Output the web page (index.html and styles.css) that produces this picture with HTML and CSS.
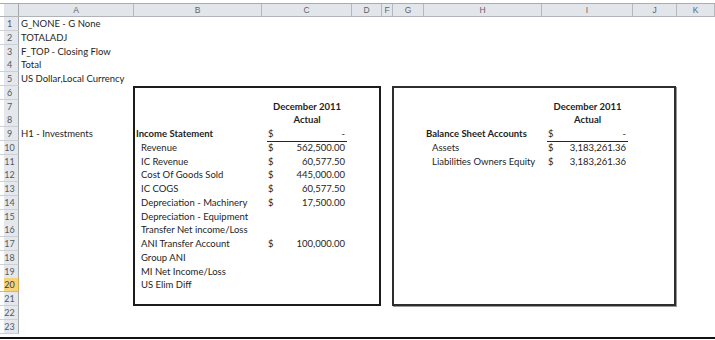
FILE: index.html
```html
<!DOCTYPE html>
<html>
<head>
<meta charset="utf-8">
<link rel="stylesheet" href="styles.css">
</head>
<body>
<div class="sheet">
  <div class="colhdr">
    <div class="corner"></div>
    <div class="ch">A</div>
    <div class="ch">B</div>
    <div class="ch">C</div>
    <div class="ch">D</div>
    <div class="ch">F</div>
    <div class="ch">G</div>
    <div class="ch">H</div>
    <div class="ch">I</div>
    <div class="ch">J</div>
    <div class="ch">K</div>
  </div>
  <div class="body">
    <div class="rows">
      <div class="row"><div class="rh">1</div><div class="ca">G_NONE - G None</div></div>
      <div class="row"><div class="rh">2</div><div class="ca">TOTALADJ</div></div>
      <div class="row"><div class="rh">3</div><div class="ca">F_TOP - Closing Flow</div></div>
      <div class="row"><div class="rh">4</div><div class="ca">Total</div></div>
      <div class="row"><div class="rh">5</div><div class="ca">US Dollar,Local Currency</div></div>
      <div class="row"><div class="rh">6</div></div>
      <div class="row"><div class="rh">7</div></div>
      <div class="row"><div class="rh">8</div></div>
      <div class="row"><div class="rh">9</div><div class="ca">H1 - Investments</div></div>
      <div class="row"><div class="rh">10</div></div>
      <div class="row"><div class="rh">11</div></div>
      <div class="row"><div class="rh">12</div></div>
      <div class="row"><div class="rh">13</div></div>
      <div class="row"><div class="rh">14</div></div>
      <div class="row"><div class="rh">15</div></div>
      <div class="row"><div class="rh">16</div></div>
      <div class="row"><div class="rh">17</div></div>
      <div class="row"><div class="rh">18</div></div>
      <div class="row"><div class="rh">19</div></div>
      <div class="row"><div class="rh sel">20</div></div>
      <div class="row"><div class="rh">21</div></div>
      <div class="row"><div class="rh">22</div></div>
      <div class="row"><div class="rh">23</div></div>
    </div>
    <div class="frames">
      <div class="frame f1">
        <div class="fl"></div>
        <div class="fl"><div></div><div class="hd">December 2011</div></div>
        <div class="fl"><div></div><div class="hd">Actual</div></div>
        <div class="fl"><div class="title">Income Statement</div><div class="amt ul"><span>$</span><span>-</span></div></div>
        <div class="fl"><div class="item">Revenue</div><div class="amt"><span>$</span><span>562,500.00</span></div></div>
        <div class="fl"><div class="item">IC Revenue</div><div class="amt"><span>$</span><span>60,577.50</span></div></div>
        <div class="fl"><div class="item">Cost Of Goods Sold</div><div class="amt"><span>$</span><span>445,000.00</span></div></div>
        <div class="fl"><div class="item">IC COGS</div><div class="amt"><span>$</span><span>60,577.50</span></div></div>
        <div class="fl"><div class="item">Depreciation - Machinery</div><div class="amt"><span>$</span><span>17,500.00</span></div></div>
        <div class="fl"><div class="item">Depreciation - Equipment</div></div>
        <div class="fl"><div class="item">Transfer Net income/Loss</div></div>
        <div class="fl"><div class="item">ANI Transfer Account</div><div class="amt"><span>$</span><span>100,000.00</span></div></div>
        <div class="fl"><div class="item">Group ANI</div></div>
        <div class="fl"><div class="item">MI Net Income/Loss</div></div>
        <div class="fl"><div class="item">US Elim Diff</div></div>
      </div>
      <div class="frame f2">
        <div class="fl"></div>
        <div class="fl"><div></div><div class="hd">December 2011</div></div>
        <div class="fl"><div></div><div class="hd">Actual</div></div>
        <div class="fl"><div class="title">Balance Sheet Accounts</div><div class="amt ul"><span>$</span><span>-</span></div></div>
        <div class="fl"><div class="item">Assets</div><div class="amt"><span>$</span><span>3,183,261.36</span></div></div>
        <div class="fl"><div class="item">Liabilities Owners Equity</div><div class="amt"><span>$</span><span>3,183,261.36</span></div></div>
      </div>
    </div>
  </div>
  <div class="rule"></div>
</div>
</body>
</html>
```
FILE: styles.css
```css
:root {
  --cols: 19px 115px 128px 90px 30px 11px 31px 118px 91px 44px 38px;
  --rowh: 13.75px;
}
* { box-sizing: border-box; }
html, body {
  margin: 0;
  padding: 0;
  background: #fff;
}
body {
  width: 715px;
  height: 340px;
  overflow: hidden;
  font-family: "Lato", "Liberation Sans", sans-serif;
  font-size: 9.5px;
  color: #1e1e1e;
}
.sheet {
  padding-top: 3px;
}
.colhdr {
  display: grid;
  grid-template-columns: var(--cols);
  height: 14px;
  border-top: 1px solid #a9adb3;
  border-bottom: 1px solid #b0b4ba;
  background: #e2e6eb;
}
.corner {
  border-right: 1px solid #a4a9b0;
  background: linear-gradient(to right, #fff 4px, #e2e6eb 4px);
}
.ch {
  border-right: 1px solid #b4b9c0;
  text-align: center;
  font-family: "Liberation Sans", sans-serif;
  font-size: 8.5px;
  line-height: 12px;
  color: #5f6368;
}
.body {
  display: grid;
}
.rows, .frames {
  grid-area: 1 / 1;
}
.row {
  display: grid;
  grid-template-columns: var(--cols);
  height: var(--rowh);
}
.rh {
  background: linear-gradient(to right, #fff 4px, #e4e8ed 4px);
  border-right: 1px solid #a4a9b0;
  border-bottom: 1px solid #ccd0d5;
  text-align: center;
  font-size: 9px;
  line-height: 13px;
  color: #55595e;
  padding-left: 1px;
}
.rh.sel {
  background: linear-gradient(to right, #fff 4px, #f7d27c 4px);
  border-bottom-color: #e9b44c;
  border-right-color: #e2a53a;
  color: #3b3b3b;
}
.ca {
  padding-left: 2px;
  line-height: var(--rowh);
  white-space: nowrap;
}
.frames {
  display: grid;
  grid-template-columns: var(--cols);
  grid-template-rows: repeat(23, var(--rowh));
  pointer-events: none;
}
.frame {
  grid-row: 6 / 22;
  margin: 0 1px 0 -1px;
  outline: 2px solid #1c1c1c;
  outline-offset: -2px;
  display: flex;
  flex-direction: column;
}
.f1 { grid-column: 3 / 6; }
.f2 {
  grid-column: 7 / 11;
  outline-color: #2e2e2e;
  box-shadow: 1px 1px 0 #9a9a9a;
}
.fl {
  display: grid;
  height: var(--rowh);
  line-height: var(--rowh);
  white-space: nowrap;
}
.f1 .fl { grid-template-columns: 129px 90px 1fr; }
.f2 .fl { grid-template-columns: 150px 91px 1fr; }
.hd {
  font-weight: bold;
  text-align: center;
}
.f1 .title { padding-left: 3px; font-weight: bold; }
.f1 .item { padding-left: 8px; }
.f2 .title { padding-left: 34px; font-weight: bold; }
.f2 .item { padding-left: 40px; }
.amt {
  display: flex;
  justify-content: space-between;
  padding: 0 7px 0 6px;
}
.ul {
  margin: 0 5px 0 5px;
  padding: 0 2px 0 1px;
  border-bottom: 1px solid #262626;
}
.rule {
  margin-top: 4px;
  height: 2px;
  background: #111;
}
```
